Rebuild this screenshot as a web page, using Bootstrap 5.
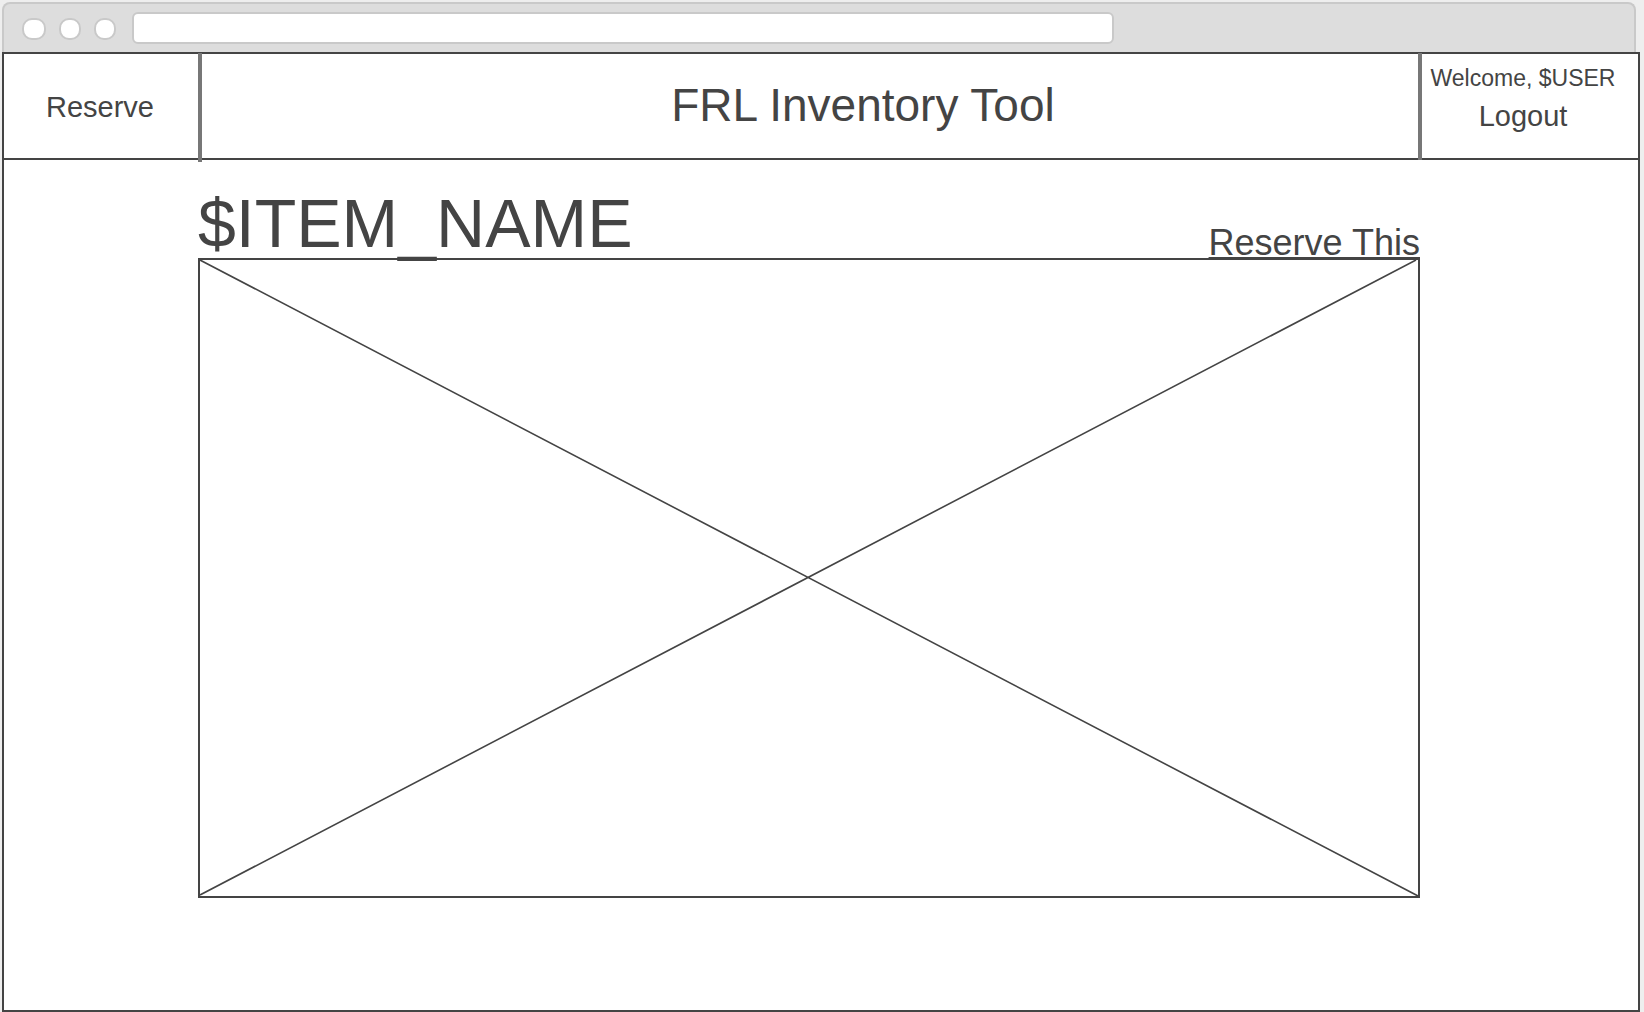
<!DOCTYPE html>
<html lang="en">
<head>
<meta charset="utf-8">
<meta name="viewport" content="width=device-width, initial-scale=1">
<title>FRL Inventory Tool</title>
<link rel="stylesheet" href="https://cdn.jsdelivr.net/npm/bootstrap@5.3.0/dist/css/bootstrap.min.css">
<style>
  :root { --ink: #444444; --rule: #777777; --chrome-line: #c9c9c9; }
  body { font-family: "Liberation Sans", Arial, sans-serif; color: var(--ink); background: #eeeeee; padding: 2px 4px 0 2px; }
  a { color: inherit; }
  .browser-bar { height: 50px; margin-right: 4px; padding: 0 18px; gap: 13px; background: #dddddd; border: 2px solid var(--chrome-line); border-bottom: 0; border-radius: 8px 8px 0 0; }
  .window-dot { width: 22px; height: 22px; margin-top: 2px; background: #fff; border: 2px solid var(--chrome-line); border-radius: 10px; }
  .window-dot:first-child { width: 24px; }
  .address-box { width: 982px; max-width: 70%; height: 32px; margin-left: 3px; padding: 0 8px; background: #fff; border: 2px solid var(--chrome-line); border-radius: 6px; }
  .page-frame { min-height: calc(100vh - 52px); background: #fff; border: 2px solid var(--ink); }
  .site-header { height: 106px; border-bottom: 2px solid var(--ink); }
  .nav-cell { width: 198px; margin: -1px 0 -4px; padding: 0 2px 0 0; border-right: 4px solid var(--rule); font-size: 29px; }
  .title-cell { padding: 0 0 2px 106px; }
  .title-cell h1 { font-size: 46px; line-height: 48px; }
  .user-cell { width: 220px; margin: -1px 0 -2px; padding: 0 14px 20px 0; border-left: 4px solid var(--rule); line-height: 38px; }
  .welcome-text { font-size: 23px; }
  .logout-link { font-size: 29px; }
  .item-area { padding: 28px 218px 28px 194px; }
  .item-name { font-size: 68px; line-height: 70px; }
  .reserve-link { font-size: 36px; line-height: 30px; text-decoration-thickness: 2px; text-underline-offset: 2px; }
  .item-image { aspect-ratio: 1222 / 640; border: 2px solid var(--ink); }
</style>
</head>
<body>
<div class="browser-bar d-flex align-items-center">
  <span class="window-dot flex-shrink-0"></span>
  <span class="window-dot flex-shrink-0"></span>
  <span class="window-dot flex-shrink-0"></span>
  <input class="address-box" type="text" aria-label="Address">
</div>
<div class="page-frame">
  <header class="site-header d-flex">
    <nav class="nav-cell flex-shrink-0 d-flex align-items-center justify-content-center">
      <a class="text-decoration-none" href="#reserve">Reserve</a>
    </nav>
    <div class="title-cell flex-grow-1 d-flex align-items-center justify-content-center">
      <h1 class="m-0 fw-normal">FRL Inventory Tool</h1>
    </div>
    <div class="user-cell flex-shrink-0 d-flex flex-column align-items-center justify-content-center text-nowrap">
      <span class="welcome-text">Welcome, $USER</span>
      <a class="logout-link text-decoration-none" href="#logout">Logout</a>
    </div>
  </header>
  <main class="item-area">
    <div class="d-flex align-items-end justify-content-between">
      <h2 class="item-name m-0 fw-normal">$ITEM_NAME</h2>
      <a class="reserve-link text-nowrap" href="#reserve-this">Reserve This</a>
    </div>
    <div class="item-image">
      <svg class="d-block w-100 h-100" viewBox="0 0 1218 636" preserveAspectRatio="none" role="img" aria-label="Item image">
        <path d="M0 0L1218 636M0 635L1216 0" fill="none" stroke="#444444" stroke-width="1.6"/>
      </svg>
    </div>
  </main>
</div>
<script src="https://cdn.jsdelivr.net/npm/bootstrap@5.3.0/dist/js/bootstrap.bundle.min.js"></script>
</body>
</html>
